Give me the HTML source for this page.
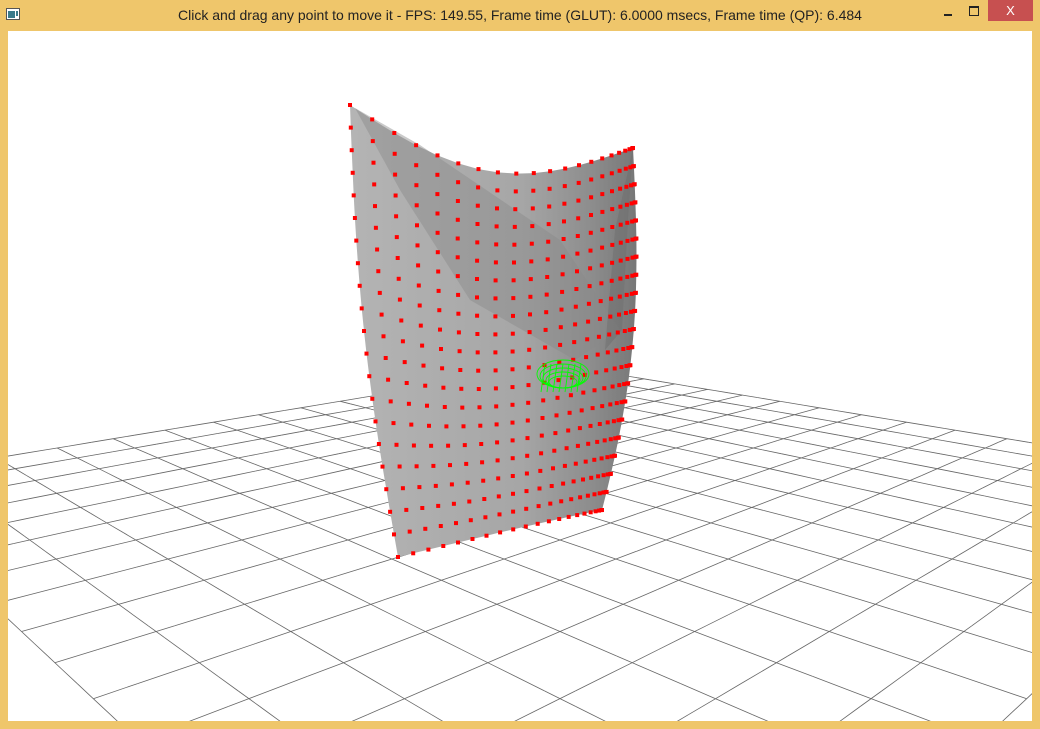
<!DOCTYPE html>
<html><head><meta charset="utf-8"><style>
html,body{margin:0;padding:0;width:1040px;height:729px;overflow:hidden;background:#efc66b;font-family:"Liberation Sans",sans-serif}
#title{position:absolute;left:0;top:0;width:1040px;height:31px;background:#efc66b}
#title .t{position:absolute;left:0;right:0;top:7px;text-align:center;font-size:14px;color:#222}
#canvas{position:absolute;left:8px;top:31px;width:1024px;height:690px;background:#fff;overflow:hidden}
#s{display:block}
.x{position:absolute;left:988px;top:0;width:45px;height:21px;background:#c75050;color:#fff;text-align:center;font-size:13px;line-height:21px}
</style></head><body>
<div id="title">
<svg style="position:absolute;left:6px;top:8px" width="14" height="12"><rect x="0.5" y="0.5" width="13" height="11" fill="#fff" stroke="#555"/><rect x="2" y="3" width="7" height="7" fill="#3a7a8a"/><rect x="10" y="3" width="2" height="5" fill="#3a7a8a"/></svg>
<div class="t">Click and drag any point to move it - FPS: 149.55, Frame time (GLUT): 6.0000 msecs, Frame time (QP): 6.484</div>
<div style="position:absolute;left:944px;top:14px;width:8px;height:2px;background:#222"></div>
<div style="position:absolute;left:969px;top:6px;width:8px;height:7px;border:1px solid #222;border-top-width:2px"></div>
<div class="x">X</div>
</div>
<div id="canvas"><svg id="s" width="1024" height="690" xmlns="http://www.w3.org/2000/svg"></svg></div>
<script>
var s=document.getElementById('s'),h='';
var OX=8,OY=31;
var yh=200,f=1000,Z0=10,a=7,H=2.805,cx=560;
function P(X,Z){return [cx+f*X/Z-OX, yh+f*H/Z-OY];}
var N=16;
function G(u,v){var X=(u-v)*a/2, Z=Z0+(u+v)*a/2; return P(X,Z);}
function line(p,q,c,w){h+='<line x1="'+p[0].toFixed(1)+'" y1="'+p[1].toFixed(1)+'" x2="'+q[0].toFixed(1)+'" y2="'+q[1].toFixed(1)+'" stroke="'+c+'" stroke-width="'+w+'"/>';}
for(var i=0;i<=N;i++){var t=-1+2*i/N;
 var segs=40;for(var k=0;k<segs;k++){var v1=-1+2*k/segs,v2=-1+2*(k+1)/segs;
  var A=G(t,v1),B=G(t,v2);var Za=Z0+(t+v1)*a/2,Zb=Z0+(t+v2)*a/2;
  if(Za>0.3&&Zb>0.3){line(A,B,'#666',0.8);}
  A=G(v1,t);B=G(v2,t);
  if(Za>0.3&&Zb>0.3){line(A,B,'#666',0.8);}
 }}
function S(u,v){
 var uu=Math.sin(u*Math.PI/2);
 var tl=[350,105],tr=[633,148],bl=[398,557],br=[592,510];
 var x=(1-v)*((1-uu)*tl[0]+uu*tr[0])+v*((1-uu)*bl[0]+uu*br[0]);
 var y=(1-v)*((1-uu)*tl[1]+uu*tr[1])+v*((1-uu)*bl[1]+uu*br[1]);
 y+=Math.sin(uu*Math.PI)*(1-v)*45;
 x+=-Math.sin(v*Math.PI)*10*(1-uu);
 x+=Math.pow(uu,4)*22*Math.sin(v*Math.PI*0.85);
 return [x-OX,y-OY];}
var M=20;
h+='<defs><linearGradient id="g" x1="0" y1="0" x2="1" y2="0"><stop offset="0" stop-color="#b4b4b4"/><stop offset="0.6" stop-color="#a6a6a6"/><stop offset="0.85" stop-color="#8c8c8c"/><stop offset="1" stop-color="#777"/></linearGradient></defs>';
var pts=[];for(var k=0;k<=M;k++)pts.push(S(k/M,0));for(k=0;k<=M;k++)pts.push(S(1,k/M));
for(k=M;k>=0;k--)pts.push(S(k/M,1));for(k=M;k>=0;k--)pts.push(S(0,k/M));
h+='<polygon fill="url(#g)" points="'+pts.map(function(p){return p[0].toFixed(1)+','+p[1].toFixed(1)}).join(' ')+'"/>';
var d=[[355,108],[420,145],[560,240],[620,330],[575,360],[470,300],[400,190]];
h+='<polygon fill="#8a8a8a" opacity="0.45" points="'+d.map(function(p){return (p[0]-OX)+','+(p[1]-OY)}).join(' ')+'"/>';
var d2=[[633,148],[628,220],[622,330],[605,350],[615,230]];
h+='<polygon fill="#6e6e6e" opacity="0.5" points="'+d2.map(function(p){return (p[0]-OX)+','+(p[1]-OY)}).join(' ')+'"/>';
for(var j=0;j<=M;j++)for(var i2=0;i2<=M;i2++){var p=S(i2/M,j/M);
 h+='<rect x="'+(p[0]-2).toFixed(1)+'" y="'+(p[1]-2).toFixed(1)+'" width="4" height="4" fill="#f00"/>';}
var gc=[563-OX,378-OY];
for(var r=0;r<5;r++){h+='<ellipse cx="'+gc[0]+'" cy="'+(gc[1]+r*2-4)+'" rx="'+(26-r*3)+'" ry="'+(14-r*2)+'" fill="none" stroke="#0f0" stroke-width="0.9"/>';}
for(var q=-3;q<=3;q++){h+='<line x1="'+(gc[0]+q*6)+'" y1="'+(gc[1]-14)+'" x2="'+(gc[0]+q*6-4)+'" y2="'+(gc[1]+14)+'" stroke="#0f0" stroke-width="0.9"/>';}
s.innerHTML=h;
</script>
</body></html>
